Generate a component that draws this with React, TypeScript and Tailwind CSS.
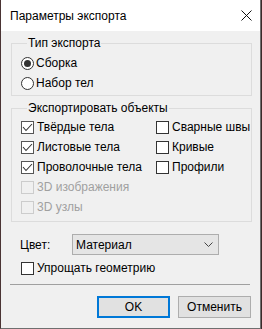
import React from 'react';

const font = { fontFamily: '"Liberation Sans", "Noto Sans", sans-serif' };

function Radio({ label, checked }: { label: string; checked?: boolean }) {
  return (
    <div className="flex h-[20px] items-center">
      <span className="flex h-[13px] w-[13px] items-center justify-center rounded-full border border-[#333] bg-white">
        {checked && <span className="h-[7px] w-[7px] rounded-full bg-[#333]" />}
      </span>
      <span className="ml-[2px] whitespace-nowrap text-[12px] leading-none text-black">{label}</span>
    </div>
  );
}

function Check({ label, checked, disabled }: { label: string; checked?: boolean; disabled?: boolean }) {
  return (
    <div className="flex h-[20px] items-center">
      <span
        className={
          disabled
            ? 'flex h-[13px] w-[13px] items-center justify-center border border-[#cccccc] bg-[#f0f0f0]'
            : checked
              ? 'flex h-[13px] w-[13px] items-center justify-center border border-[#555] bg-white'
              : 'flex h-[13px] w-[13px] items-center justify-center border border-[#333] bg-white'
        }
      >
        {checked && (
          <svg width="11" height="11" viewBox="0 0 11 11">
            <polyline points="1,5 4,8.5 10,2" fill="none" stroke="#333" strokeWidth="1.1" />
          </svg>
        )}
      </span>
      <span
        className={
          disabled
            ? 'ml-[3px] whitespace-nowrap text-[12px] leading-none text-[#a0a0a0]'
            : 'ml-[3px] whitespace-nowrap text-[12px] leading-none text-black'
        }
      >
        {label}
      </span>
    </div>
  );
}

export default function App() {
  return (
    <div className="flex h-[329px] w-[262px] bg-[#3b2a2a]" style={font}>
      <div className="flex h-[329px] w-[261px] flex-col border-b border-l border-r border-b-[#6f6f6f] border-l-[#4a3434] border-r-[#6f6f6f] bg-[#f0f0f0]">
        {/* title bar */}
        <div className="flex h-[31px] shrink-0 items-center justify-between bg-white pl-[9px] pr-[8px]">
          <span className="text-[12px] text-black">Параметры экспорта</span>
          <svg width="11" height="11" viewBox="0 0 11 11">
            <path d="M0.5 0.5 L10.5 10.5 M10.5 0.5 L0.5 10.5" stroke="#111" strokeWidth="1" />
          </svg>
        </div>

        <fieldset className="ml-[10px] mt-[4px] w-[241px] border border-[#dcdcdc] pb-[2px] pl-[9px]">
          <legend className="ml-[6px] px-[1px] text-[12px] leading-[16px] text-black">Тип экспорта</legend>
          <div className="pt-[2px]">
            <Radio label="Сборка" checked />
            <Radio label="Набор тел" />
          </div>
        </fieldset>

        <fieldset className="ml-[10px] mt-[4px] w-[241px] border border-[#dcdcdc] pb-[4px] pl-[9px]">
          <legend className="ml-[6px] px-[1px] text-[12px] leading-[16px] text-black">Экспортировать объекты</legend>
          <div className="grid grid-cols-[135px_1fr] pt-[1px]">
            <div>
              <Check label="Твёрдые тела" checked />
              <Check label="Листовые тела" checked />
              <Check label="Проволочные тела" checked />
              <Check label="3D изображения" disabled />
              <Check label="3D узлы" disabled />
            </div>
            <div>
              <Check label="Сварные швы" />
              <Check label="Кривые" />
              <Check label="Профили" />
            </div>
          </div>
        </fieldset>

        <div className="mt-[12px] flex h-[21px] items-center pl-[19px]">
          <span className="w-[52px] text-[12px] text-black">Цвет:</span>
          <div className="flex h-[21px] w-[147px] items-center justify-between border border-[#adadad] bg-[#e5e5e5] pl-[3px] pr-[5px]">
            <span className="text-[12px] text-black">Материал</span>
            <svg width="9" height="6" viewBox="0 0 9 6">
              <polyline points="0.5,0.5 4.5,4.5 8.5,0.5" fill="none" stroke="#444" strokeWidth="1" />
            </svg>
          </div>
        </div>

        <div className="mt-[3px] pl-[20px]">
          <Check label="Упрощать геометрию" />
        </div>

        <div className="ml-[9px] mt-[6px] h-px w-[240px] bg-[#a0a0a0]" />

        <div className="mt-[11px] flex justify-end gap-[8px] pr-[9px]">
          <button className="h-[22px] w-[73px] border-2 border-[#0078d7] bg-[#e1e1e1] text-[12px] text-black">OK</button>
          <button className="h-[22px] w-[73px] border border-[#adadad] bg-[#e1e1e1] text-[12px] text-black">Отменить</button>
        </div>
      </div>
    </div>
  );
}
